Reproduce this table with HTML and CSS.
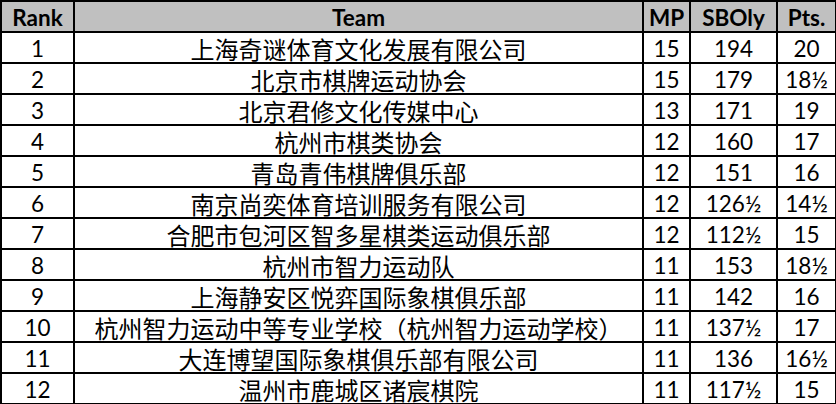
FILE: index.html
```html
<!DOCTYPE html>
<html lang="zh">
<head>
<meta charset="utf-8">
<title>Standings</title>
<link rel="stylesheet" href="styles.css">
</head>
<body>
<table class="standings">
  <colgroup>
    <col class="c-rank"><col class="c-team"><col class="c-mp"><col class="c-sb"><col class="c-pts">
  </colgroup>
  <thead>
    <tr><th>Rank</th><th>Team</th><th>MP</th><th>SBOly</th><th>Pts.</th></tr>
  </thead>
  <tbody>
    <tr><td>1</td><td class="team">上海奇谜体育文化发展有限公司</td><td>15</td><td>194</td><td>20</td></tr>
    <tr><td>2</td><td class="team">北京市棋牌运动协会</td><td>15</td><td>179</td><td>18½</td></tr>
    <tr><td>3</td><td class="team">北京君修文化传媒中心</td><td>13</td><td>171</td><td>19</td></tr>
    <tr><td>4</td><td class="team">杭州市棋类协会</td><td>12</td><td>160</td><td>17</td></tr>
    <tr><td>5</td><td class="team">青岛青伟棋牌俱乐部</td><td>12</td><td>151</td><td>16</td></tr>
    <tr><td>6</td><td class="team">南京尚奕体育培训服务有限公司</td><td>12</td><td>126½</td><td>14½</td></tr>
    <tr><td>7</td><td class="team">合肥市包河区智多星棋类运动俱乐部</td><td>12</td><td>112½</td><td>15</td></tr>
    <tr><td>8</td><td class="team">杭州市智力运动队</td><td>11</td><td>153</td><td>18½</td></tr>
    <tr><td>9</td><td class="team">上海静安区悦弈国际象棋俱乐部</td><td>11</td><td>142</td><td>16</td></tr>
    <tr><td>10</td><td class="team">杭州智力运动中等专业学校（杭州智力运动学校）</td><td>11</td><td>137½</td><td>17</td></tr>
    <tr><td>11</td><td class="team">大连博望国际象棋俱乐部有限公司</td><td>11</td><td>136</td><td>16½</td></tr>
    <tr><td>12</td><td class="team">温州市鹿城区诸宸棋院</td><td>11</td><td>117½</td><td>15</td></tr>
  </tbody>
</table>
</body>
</html>
```
FILE: styles.css
```css
html, body {
  margin: 0;
  padding: 0;
  background: #ffffff;
}
body {
  width: 836px;
  height: 404px;
  overflow: hidden;
}
.standings {
  border-collapse: separate;
  border-spacing: 0;
  table-layout: fixed;
  width: 837px;
  border-top: 2px solid #000;
  border-left: 2px solid #000;
  font-family: "Lato", "Noto Sans CJK SC", sans-serif;
  font-size: 22.5px;
  color: #000;
}
.c-rank { width: 73px; }
.c-team { width: 569px; }
.c-mp { width: 47px; }
.c-sb { width: 87px; }
.c-pts { width: 59px; }
.standings th,
.standings td {
  border-right: 2px solid #000;
  border-bottom: 2px solid #000;
  height: 27px;
  padding: 2px 0 0 0;
  box-sizing: content-box;
  text-align: center;
  vertical-align: middle;
  line-height: 26px;
  white-space: nowrap;
  overflow: hidden;
}
.standings th {
  background: #c0c0c0;
  font-weight: 700;
}
.standings td.team {
  font-family: "Noto Sans CJK SC", sans-serif;
  font-size: 24px;
  line-height: 24px;
  height: 26px;
  padding-top: 3px;
}
```
